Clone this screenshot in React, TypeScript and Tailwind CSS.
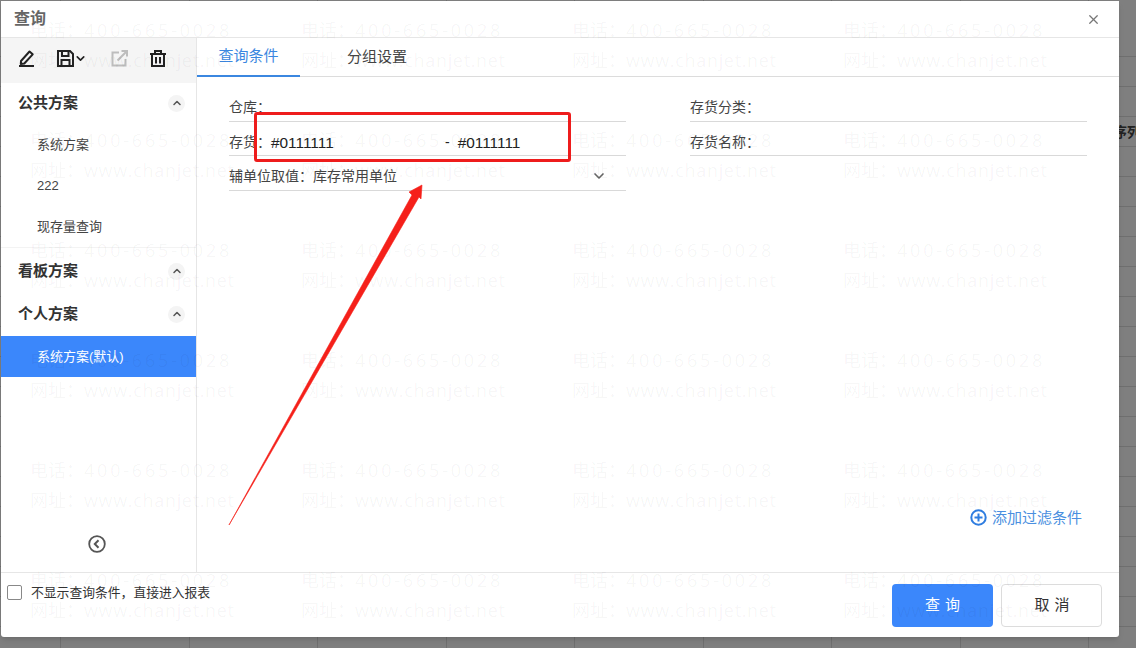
import React from 'react';
import { ChevronDown, ChevronUp, X } from 'lucide-react';

const SANS = 'font-["Liberation_Sans","Noto_Sans_CJK_SC",sans-serif]';

const Watermark = () => {
  const rows = [30, 140, 250, 360, 470, 580];
  const cols = [30, 301, 572, 843];
  return (
    <div className="absolute inset-0 pointer-events-none overflow-hidden z-20">
      {rows.map((y) =>
        cols.map((x) => (
          <div
            key={`${x}-${y}`}
            className='absolute font-["Open_Sans","Noto_Sans_CJK_SC",sans-serif] text-[18px] leading-[30px] text-[#000000]/[0.045] whitespace-nowrap'
            style={{ left: x, top: y - 15 }}
          >
            <div>电话：<span className="tracking-[2.8px]">400-665-0028</span></div>
            <div>网址：<span className="tracking-[0.67px]">www.chanjet.net</span></div>
          </div>
        ))
      )}
    </div>
  );
};

const Backdrop = () => (
  <div className="absolute inset-0 bg-[#7f7f7f] flex flex-col pt-[27px]">
    {Array.from({ length: 21 }).map((_, i) => (
      <div key={i} className="h-[30px] shrink-0 border-b border-[#6f6f6f]" />
    ))}
    <div className="absolute inset-0 flex pl-[60px]">
      {Array.from({ length: 9 }).map((_, i) => (
        <div key={i} className="w-[128.5px] shrink-0 border-l border-[#6f6f6f]" />
      ))}
    </div>
    <div className="absolute left-[1113px] top-[122px] w-[23px] overflow-hidden text-[14px] font-bold text-[#222] whitespace-nowrap">
      序列
    </div>
  </div>
);

const PenIcon = () => (
  <svg width="16" height="18" viewBox="0 0 16 18" fill="none" stroke="#222" strokeWidth="2">
    <path d="M2 12 10.5 2.5l3.2 2.8-8.4 9.2-3.5.4z" strokeLinejoin="round" />
    <path d="M0 17h15" />
  </svg>
);

const SaveIcon = () => (
  <svg width="17" height="17" viewBox="0 0 17 17" fill="none" stroke="#222" strokeWidth="2">
    <path d="M1 1h12l3 3v12H1z" />
    <path d="M5 1v5h6.5V1M4.5 16v-6h8v6" />
  </svg>
);

const ExportIcon = () => (
  <svg width="17" height="17" viewBox="0 0 17 17" fill="none" stroke="#bdbdbd" strokeWidth="2">
    <path d="M8 2.5H1.5v13h13V9" />
    <path d="M6.5 10.5 15.5 1.5M10.5 1h5.5v5.5" />
  </svg>
);

const TrashIcon = () => (
  <svg width="16" height="17" viewBox="0 0 16 17" fill="none" stroke="#222" strokeWidth="2">
    <path d="M0 4h16M5 4V1h6v3M2 4v12h12V4M6 7v6.5M10 7v6.5" />
  </svg>
);

const SectionHeader = ({ title, className }: { title: string; className: string }) => (
  <div className={`flex items-center justify-between pl-[17px] pr-[11px] ${className}`}>
    <span className="text-[15px] font-bold text-[#333]">{title}</span>
    <span className="w-[17px] h-[17px] rounded-full bg-[#f4f4f4] flex items-center justify-center">
      <ChevronUp size={12} strokeWidth={3} className="text-[#555]" />
    </span>
  </div>
);

const Field = ({ children, className = 'h-[34px] pt-[6px]' }: { children: React.ReactNode; className?: string }) => (
  <div className={`border-b border-[#d9d9d9] flex items-center text-[14px] text-[#444] whitespace-nowrap ${className}`}>
    {children}
  </div>
);

const Annotation = () => (
  <>
    <div className="absolute left-[254px] top-[112px] w-[317px] h-[50px] border-[3px] border-[#ee1c1c] rounded-[3px] z-30" />
    <svg className="absolute inset-0 z-30 pointer-events-none" width="1136" height="648">
      <path d="M229 525 L412 195 L409 192 L422 185 L421 199 L419 197 Z" fill="#f5201a" stroke="#f5201a" strokeWidth="0.6" />
    </svg>
  </>
);

export default function App() {
  return (
    <div className={`relative w-[1136px] h-[648px] overflow-hidden ${SANS}`}>
      <Backdrop />
      <div className="absolute left-[1px] top-[1px] w-[1118px] h-[636px] bg-white rounded-b-[3px] shadow-md flex flex-col z-10">
        <div className="h-[37px] shrink-0 border-b border-[#e6e6e6] flex items-center justify-between pl-[13px] pr-[18px]">
          <span className="text-[16px] font-bold text-[#666]">查询</span>
          <X size={15} className="text-[#777]" />
        </div>
        <div className="flex flex-1 min-h-0">
          <aside className="w-[196px] shrink-0 border-r border-[#e6e6e6] flex flex-col">
            <div className="h-[45px] bg-[#f5f5f5] flex items-center pl-[18px] pb-[5px]">
              <PenIcon />
              <span className="ml-[22px] flex items-center">
                <SaveIcon />
                <ChevronDown size={13} strokeWidth={3} className="text-[#222]" />
              </span>
              <span className="ml-[24px]"><ExportIcon /></span>
              <span className="ml-[22px]"><TrashIcon /></span>
            </div>
            <SectionHeader title="公共方案" className="mt-[9px] h-[22px]" />
            <div className="text-[13px] text-[#444] pl-[36px] flex flex-col border-b border-[#f3f3f3]">
              <div className="h-[41px] mt-[10px] flex items-center">系统方案</div>
              <div className="h-[41px] flex items-center">222</div>
              <div className="h-[41px] flex items-center">现存量查询</div>
            </div>
            <SectionHeader title="看板方案" className="mt-[12px] h-[22px]" />
            <SectionHeader title="个人方案" className="mt-[21px] h-[22px]" />
            <div className="mt-[11px] h-[41px] bg-[#3b87fb] text-white text-[13px] pl-[36px] flex items-center">
              系统方案(默认)
            </div>
            <div className="flex-1 flex items-end justify-center pb-[19px] pr-[3px]">
              <svg width="18" height="18" viewBox="0 0 18 18" fill="none" stroke="#555" strokeWidth="1.8">
                <circle cx="9" cy="9" r="7.8" />
                <path d="M10.5 5.2 6.8 9l3.7 3.8" strokeWidth="2" />
              </svg>
            </div>
          </aside>
          <main className="flex-1 min-w-0 flex flex-col">
            <div className="h-[39px] shrink-0 border-b border-[#dcdcdc] flex text-[15px]">
              <div className="w-[103px] h-[39px] border-b-2 border-[#3b87e0] text-[#3b87e0] flex items-center justify-center">
                查询条件
              </div>
              <div className="w-[154px] text-[#444] flex items-center justify-center">分组设置</div>
            </div>
            <div className="flex gap-[64px] pl-[32px] pt-[11px]">
              <div className="w-[397px]">
                <Field>仓库：</Field>
                <Field className="h-[34px] pt-[8px]">
                  <span>存货：</span>
                  <span className="w-[174px] text-[15.4px] text-[#222]">#0111111</span>
                  <span className="text-[#222]">-</span>
                  <span className="ml-[8px] text-[15.4px] text-[#222]">#0111111</span>
                </Field>
                <Field className="h-[35px] pt-[6px]">
                  <span>辅单位取值：</span>
                  <span className="flex-1">库存常用单位</span>
                  <ChevronDown size={16} strokeWidth={2.5} className="mr-[19px] text-[#666]" />
                </Field>
              </div>
              <div className="w-[397px]">
                <Field>存货分类：</Field>
                <Field className="h-[34px] pt-[8px]">存货名称：</Field>
              </div>
            </div>
            <div className="flex-1 flex items-end justify-end pr-[37px] pb-[43px]">
              <div className="flex items-center gap-[5px] text-[15px] text-[#4a8fe0]">
                <svg width="17" height="17" viewBox="0 0 17 17" fill="none" stroke="#2f7de0" strokeWidth="2">
                  <circle cx="8.5" cy="8.5" r="7.2" />
                  <path d="M8.5 4.5v8M4.5 8.5h8" />
                </svg>
                添加过滤条件
              </div>
            </div>
          </main>
        </div>
        <div className="h-[65px] shrink-0 border-t border-[#e6e6e6] flex items-start justify-between pl-[6px] pr-[17px] pt-[11px]">
          <label className="flex items-center gap-[9px] text-[12.8px] text-[#333] mt-[-1px]">
            <span className="w-[15px] h-[15px] rounded-[2px] border border-[#888] bg-white" />
            不显示查询条件，直接进入报表
          </label>
          <div className="flex gap-[8px]">
            <button className="w-[101px] h-[43px] rounded-[4px] pl-[5px] bg-[#3b87fb] text-white text-[15px] tracking-[5px]">
              查询
            </button>
            <button className="w-[101px] h-[43px] rounded-[4px] pl-[6px] bg-white border border-[#dcdcdc] text-[#333] text-[15px] tracking-[5px]">
              取消
            </button>
          </div>
        </div>
      </div>
      <Watermark />
      <Annotation />
    </div>
  );
}
